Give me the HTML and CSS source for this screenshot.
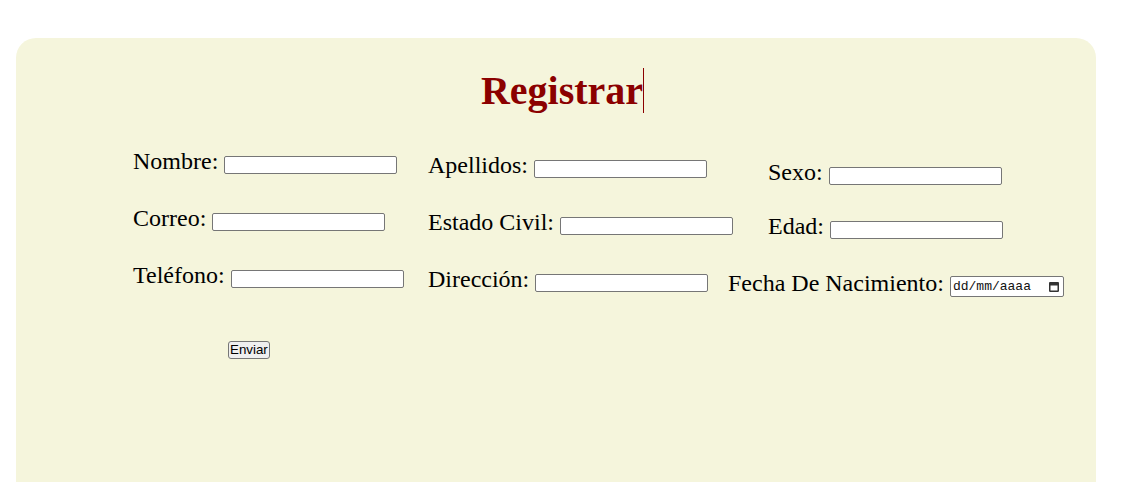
FILE: index.html
```html
<!DOCTYPE html>
<html lang="es">
<head>
<meta charset="utf-8">
<title>Registrar</title>
<link rel="stylesheet" href="styles.css">
</head>
<body>
<div class="page">
  <div class="panel">
    <h1 class="title"><span class="caret">Registrar</span></h1>
    <form class="columns">
      <div class="col col1">
        <div class="field">Nombre: <input class="txt" type="text"></div>
        <div class="field">Correo: <input class="txt" type="text"></div>
        <div class="field">Teléfono: <input class="txt" type="text"></div>
        <button class="btn" type="button">Enviar</button>
      </div>
      <div class="col col2">
        <div class="field">Apellidos: <input class="txt" type="text"></div>
        <div class="field">Estado Civil: <input class="txt" type="text"></div>
        <div class="field">Dirección: <input class="txt" type="text"></div>
      </div>
      <div class="col col3">
        <div class="field indent">Sexo: <input class="txt" type="text"></div>
        <div class="field indent">Edad: <input class="txt" type="text"></div>
        <div class="field fecha">Fecha De Nacimiento: <span class="date"><span class="date-text">dd/mm/aaaa</span><svg class="cal" width="10" height="11" viewBox="0 0 10 11"><rect x="0.75" y="1.75" width="8.5" height="8.5" rx="0.5" fill="none" stroke="#333" stroke-width="1.5"/><rect x="0.5" y="1.5" width="9" height="3" fill="#333"/></svg></span></div>
      </div>
    </form>
  </div>
</div>
</body>
</html>
```
FILE: styles.css
```css
html, body {
  margin: 0;
  padding: 0;
  background: #ffffff;
}

.page {
  padding: 38px 0 0 16px;
}

.panel {
  width: 1080px;
  height: 444px;
  background: #f5f5dc;
  border-radius: 20px 20px 0 0;
  padding-top: 30px;
  box-sizing: border-box;
  font-family: "Liberation Serif", "Times New Roman", serif;
  color: #000;
}

.title {
  margin: 0;
  font-size: 40px;
  font-weight: bold;
  line-height: 46px;
  color: #8b0000;
  text-align: center;
  padding-left: 13px;
}

.caret {
  border-right: 1px solid #8b0000;
}

.columns {
  display: flex;
  align-items: flex-start;
  padding-left: 117px;
  margin: 0;
}

.col {
  display: flex;
  flex-direction: column;
  align-items: flex-start;
  gap: 29px;
}

.col1 {
  width: 295px;
  margin-top: 33px;
}

.col2 {
  width: 300px;
  margin-top: 37px;
}

.col3 {
  margin-top: 44px;
  gap: 26px;
}

.field {
  font-size: 24px;
  line-height: 28px;
  white-space: nowrap;
}

.indent {
  margin-left: 40px;
}

.fecha {
  margin-top: 3px;
}

.txt {
  box-sizing: border-box;
  width: 173px;
  height: 18px;
  padding: 0 2px;
  margin: 0;
  border: 1px solid #767676;
  border-radius: 2px;
  background: #fff;
  font-family: "Liberation Sans", Arial, sans-serif;
  font-size: 13.33px;
  vertical-align: baseline;
}

.date {
  display: inline-flex;
  align-items: center;
  justify-content: space-between;
  box-sizing: border-box;
  width: 114px;
  height: 21px;
  padding: 0 4px 0 2px;
  border: 1px solid #767676;
  border-radius: 2px;
  background: #fff;
  vertical-align: 1px;
}

.date-text {
  font-family: "Liberation Mono", "DejaVu Sans Mono", monospace;
  font-size: 13px;
  line-height: 15px;
  color: #111;
}

.cal {
  display: block;
}

.btn {
  margin: 23px 0 0 95px;
  padding: 0 1px;
  height: 18px;
  border: 1px solid #767676;
  border-radius: 3px;
  background: #efefef;
  color: #000;
  font-family: "Liberation Sans", Arial, sans-serif;
  font-size: 13.33px;
  line-height: 14px;
}
```
